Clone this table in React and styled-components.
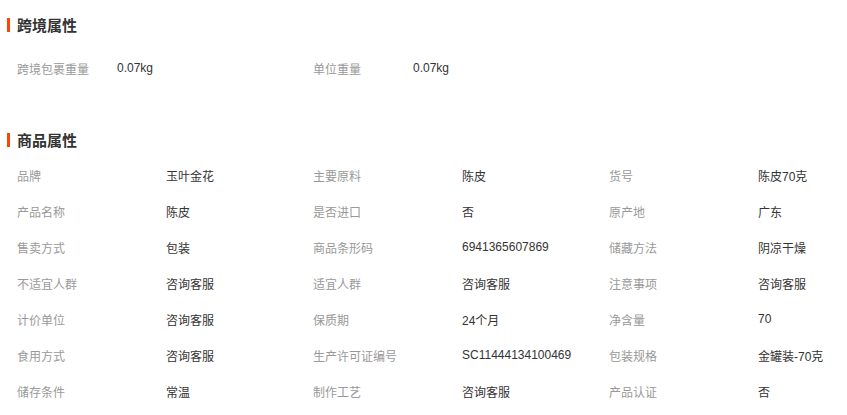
import React from "react";
import styled, { createGlobalStyle } from "styled-components";

const GlobalStyle = createGlobalStyle`
  body {
    margin: 0;
    background: #fff;
    font-family: "Liberation Sans", "Noto Sans CJK SC", sans-serif;
    font-size: 12px;
  }
`;

const crossBorder = [
  ["跨境包裹重量", "0.07kg"],
  ["单位重量", "0.07kg"],
];

const goods = [
  ["品牌", "玉叶金花"],
  ["主要原料", "陈皮"],
  ["货号", "陈皮70克"],
  ["产品名称", "陈皮"],
  ["是否进口", "否"],
  ["原产地", "广东"],
  ["售卖方式", "包装"],
  ["商品条形码", "6941365607869"],
  ["储藏方法", "阴凉干燥"],
  ["不适宜人群", "咨询客服"],
  ["适宜人群", "咨询客服"],
  ["注意事项", "咨询客服"],
  ["计价单位", "咨询客服"],
  ["保质期", "24个月"],
  ["净含量", "70"],
  ["食用方式", "咨询客服"],
  ["生产许可证编号", "SC11444134100469"],
  ["包装规格", "金罐装-70克"],
  ["储存条件", "常温"],
  ["制作工艺", "咨询客服"],
  ["产品认证", "否"],
];

const App = () => {
  return <Wrapper>
    <GlobalStyle />
    <Section $top="15px">
      <Title>跨境属性</Title>
      <Grid $gap="15px">
        {crossBorder.map(([k, v]) => (
          <Item key={k} $label="100px">
            <Label>{k}</Label>
            <Value>{v}</Value>
          </Item>
        ))}
      </Grid>
    </Section>

    <Section $top="44px">
      <Title>商品属性</Title>
      <Grid $gap="7px">
        {goods.map(([k, v]) => (
          <Item key={k} $label="149px">
            <Label>{k}</Label>
            <Value>{v}</Value>
          </Item>
        ))}
      </Grid>
    </Section>
  </Wrapper>;
};

const Wrapper = styled.div`
  width: 847px;
  height: 415px;
  overflow: hidden;
  padding-left: 7px;
  box-sizing: border-box;
`;

const Section = styled.section`
  margin-top: ${({ $top }) => $top};
`;

const Title = styled.h3`
  position: relative;
  margin: 0;
  padding-left: 10px;
  height: 20px;
  line-height: 20px;
  font-size: 15px;
  font-weight: bold;
  color: #333;
  font-family: "Noto Sans CJK SC", sans-serif;

  &::before {
    content: "";
    position: absolute;
    left: 0;
    top: 3px;
    width: 3px;
    height: 14px;
    background: #ff4400;
  }
`;

const Grid = styled.div`
  display: grid;
  grid-template-columns: repeat(3, 296px);
  margin-top: ${({ $gap }) => $gap};
  padding-left: 10px;
`;

const Item = styled.div`
  display: grid;
  grid-template-columns: ${({ $label }) => $label} 1fr;
  height: 36px;
  align-items: center;
`;

const Label = styled.span`
  color: #999;
  font-family: "Noto Sans CJK SC", sans-serif;
`;

const Value = styled.span`
  color: #333;
  font-family: "Liberation Sans", "Noto Sans CJK SC", sans-serif;
`;

export default App;
